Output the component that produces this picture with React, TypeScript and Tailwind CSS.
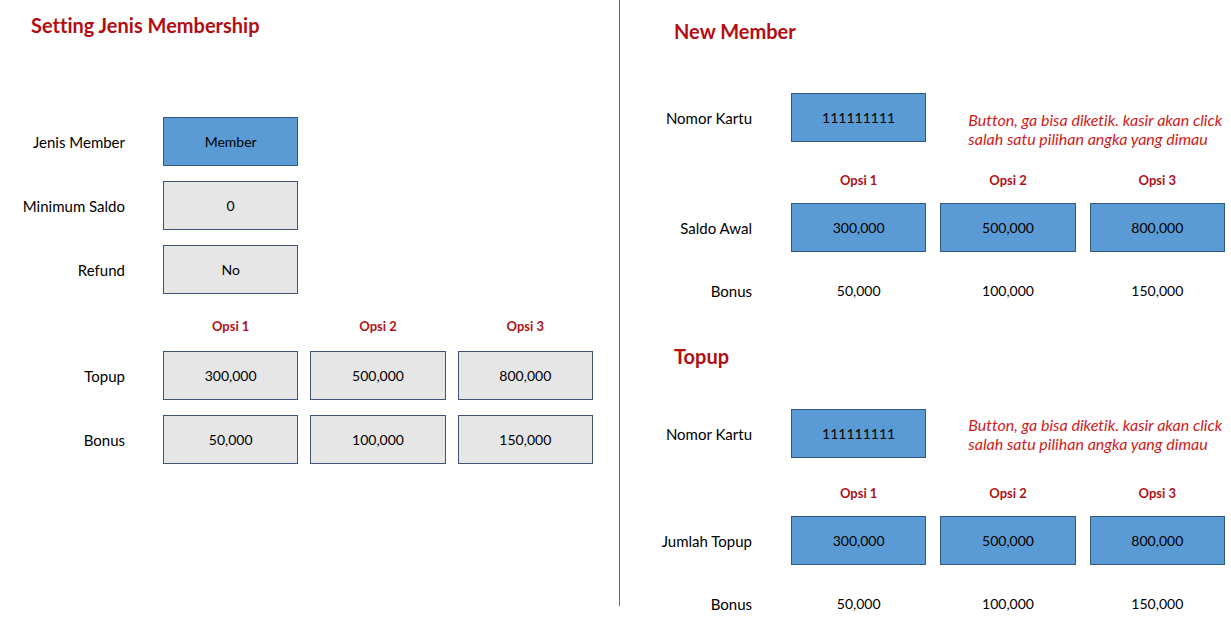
import { useId, useState } from "react";

const FONT =
  "font-['Lato','Liberation_Sans',sans-serif] [font-variant-ligatures:none]";

const BOX =
  "h-[49px] w-full min-w-0 rounded-none border text-center text-sm text-black";
const GREY_BOX = `${BOX} border-[#3f5678] bg-[#e6e6e6]`;
const BLUE_BOX = `${BOX} border-[#34577f] bg-[#5b9bd5]`;

const OPTIONS = [
  { name: "Opsi 1", amount: "300,000", bonus: "50,000" },
  { name: "Opsi 2", amount: "500,000", bonus: "100,000" },
  { name: "Opsi 3", amount: "800,000", bonus: "150,000" },
];

const LABEL =
  "col-start-1 flex items-center justify-end text-[15px] leading-5 whitespace-nowrap";

function Title({ children }: { children: string }) {
  return (
    <h2 className="text-xl leading-6 font-bold whitespace-nowrap text-[#b30d12]">
      {children}
    </h2>
  );
}

function OptionNames({ prefix }: { prefix: string }) {
  return (
    <>
      {OPTIONS.map((option, i) => (
        <span
          key={option.name}
          id={`${prefix}-option-${i}`}
          className={
            i === 0
              ? "col-start-3 text-center text-[13px] leading-[18px] font-bold text-[#b01216]"
              : "text-center text-[13px] leading-[18px] font-bold text-[#b01216]"
          }
        >
          {option.name}
        </span>
      ))}
    </>
  );
}

function SettingField({
  label,
  value,
  className,
}: {
  label: string;
  value: string;
  className: string;
}) {
  const id = useId();
  return (
    <>
      <label htmlFor={id} className={LABEL}>
        {label}
      </label>
      <input
        id={id}
        type="text"
        defaultValue={value}
        className={`col-start-3 ${className}`}
      />
    </>
  );
}

function SettingRow({
  label,
  values,
  prefix,
}: {
  label: string;
  values: string[];
  prefix: string;
}) {
  const id = useId();
  return (
    <>
      <label id={`${id}-label`} htmlFor={`${id}-0`} className={LABEL}>
        {label}
      </label>
      {values.map((value, i) => (
        <input
          key={value}
          id={`${id}-${i}`}
          type="text"
          defaultValue={value}
          aria-labelledby={`${id}-label ${prefix}-option-${i}`}
          className={i === 0 ? `col-start-3 ${GREY_BOX}` : GREY_BOX}
        />
      ))}
    </>
  );
}

function MembershipSettings() {
  const prefix = useId();
  return (
    <section className="mb-[22px] border-r border-[#41719c] pt-[13px] pr-[26px] pl-[23px]">
      <div className="pl-2">
        <Title>Setting Jenis Membership</Title>
      </div>
      <form className="mt-20 grid grid-cols-[102px_14px_repeat(3,minmax(0,1fr))] gap-x-3 gap-y-[15px]">
        <SettingField label="Jenis Member" value="Member" className={BLUE_BOX} />
        <SettingField label="Minimum Saldo" value="0" className={GREY_BOX} />
        <SettingField label="Refund" value="No" className={GREY_BOX} />
        <div className="col-span-5 grid grid-cols-subgrid pt-2 pb-px">
          <OptionNames prefix={prefix} />
        </div>
        <SettingRow
          label="Topup"
          prefix={prefix}
          values={OPTIONS.map((option) => option.amount)}
        />
        <SettingRow
          label="Bonus"
          prefix={prefix}
          values={OPTIONS.map((option) => option.bonus)}
        />
      </form>
    </section>
  );
}

function CardForm({
  title,
  amountLabel,
  className,
  gridClassName,
  noteClassName,
  namesClassName,
}: {
  title: string;
  amountLabel: string;
  className: string;
  gridClassName: string;
  noteClassName: string;
  namesClassName: string;
}) {
  const id = useId();
  const [selected, setSelected] = useState(-1);
  return (
    <section className={className}>
      <div className="pl-[10px]">
        <Title>{title}</Title>
      </div>
      <form
        className={`grid grid-cols-[88px_11px_repeat(3,minmax(0,1fr))] gap-x-[14px] ${gridClassName}`}
      >
        <label htmlFor={`${id}-card`} className={LABEL}>
          Nomor Kartu
        </label>
        <input
          id={`${id}-card`}
          type="text"
          defaultValue="111111111"
          className={`col-start-3 ${BLUE_BOX}`}
        />
        <p
          className={`col-span-2 h-8 pl-7 text-base leading-[19px] whitespace-nowrap text-[#d01a20] italic ${noteClassName}`}
        >
          Button, ga bisa diketik. kasir akan click
          <br />
          salah satu pilihan angka yang dimau
        </p>
        <div
          className={`col-span-5 grid grid-cols-subgrid pb-[14px] ${namesClassName}`}
        >
          <OptionNames prefix={id} />
        </div>
        <span className={LABEL}>{amountLabel}</span>
        {OPTIONS.map((option, i) => (
          <button
            key={option.name}
            type="button"
            aria-pressed={selected === i}
            onClick={() => setSelected(i)}
            className={i === 0 ? `col-start-3 ${BLUE_BOX}` : BLUE_BOX}
          >
            {option.amount}
          </button>
        ))}
        <div className="col-span-5 grid h-[63px] grid-cols-subgrid items-center pt-[15px]">
          <span className={LABEL}>Bonus</span>
          {OPTIONS.map((option, i) => (
            <output
              key={option.name}
              className={
                i === 0 ? "col-start-3 text-center text-sm" : "text-center text-sm"
              }
            >
              {option.bonus}
            </output>
          ))}
        </div>
      </form>
    </section>
  );
}

export default function App() {
  return (
    <main
      className={`grid grid-cols-[620fr_611fr] bg-white text-black ${FONT}`}
    >
      <MembershipSettings />
      <div className="pt-[19px] pr-[6px] pl-11">
        <CardForm
          title="New Member"
          amountLabel="Saldo Awal"
          className=""
          gridClassName="mt-[50px]"
          noteClassName="mt-[17px]"
          namesClassName="pt-[29px]"
        />
        <CardForm
          title="Topup"
          amountLabel="Jumlah Topup"
          className="mt-[29px]"
          gridClassName="mt-[41px]"
          noteClassName="mt-[6px]"
          namesClassName="pt-[26px]"
        />
      </div>
    </main>
  );
}
